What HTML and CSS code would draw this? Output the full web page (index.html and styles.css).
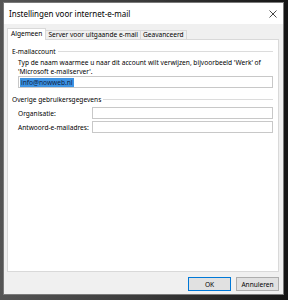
FILE: index.html
```html
<!DOCTYPE html>
<html lang="nl">
<head>
    <meta charset="UTF-8">
    <meta name="viewport" content="width=device-width, initial-scale=1.0">
    <title>Instellingen voor internet-e-mail</title>
    <link rel="stylesheet" href="styles.css">
</head>
<body>
    <div class="dialog">
        <div class="titlebar">
            <span class="title">Instellingen voor internet-e-mail</span>
            <svg class="close" width="8" height="8" viewBox="0 0 8 8">
                <path d="M0.5 0.5 L7.5 7.5 M7.5 0.5 L0.5 7.5" stroke="#333" stroke-width="0.9" fill="none"/>
            </svg>
        </div>

        <div class="dialog-body">
            <div class="tabs">
                <div class="tab active">Algemeen</div>
                <div class="tab">Server voor uitgaande e-mail</div>
                <div class="tab">Geavanceerd</div>
            </div>

            <div class="panel">
                <div class="group-title"><span>E-mailaccount</span></div>
                <div class="group">
                    <p class="hint">Typ de naam waarmee u naar dit account wilt verwijzen, bijvoorbeeld 'Werk' of 'Microsoft e-mailserver'.</p>
                    <div class="field wide"><span class="selected">info@nowweb.nl</span></div>
                </div>

                <div class="group-title"><span>Overige gebruikersgegevens</span></div>
                <div class="group form-rows">
                    <label>Organisatie:</label>
                    <div class="field"></div>
                    <label>Antwoord-e-mailadres:</label>
                    <div class="field"></div>
                </div>
            </div>

            <div class="buttons">
                <button class="default">OK</button>
                <button>Annuleren</button>
            </div>
        </div>
    </div>
</body>
</html>
```

FILE: styles.css
```css
* {
    margin: 0;
    padding: 0;
    box-sizing: border-box;
}

body {
    font-family: 'Noto Sans', sans-serif;
    font-size: 6.6px;
    color: #000;
    background: linear-gradient(to right, #555 0%, #3a3a3a 50%, #151515 100%);
    height: 300px;
    padding: 2px 4px 5px 3px;
}

.dialog {
    height: 293px;
    background: #f0f0f0;
    border: 1px solid #7a7a7a;
    display: flex;
    flex-direction: column;
}

.titlebar {
    height: 21px;
    background: #fff;
    display: flex;
    align-items: center;
    justify-content: space-between;
    padding: 0 6px 0 5px;
}

.title {
    font-size: 8px;
}

.close {
    display: block;
}

.dialog-body {
    flex: 1;
    display: flex;
    flex-direction: column;
    padding: 4px 4px 3px 3px;
}

.tabs {
    display: flex;
    align-items: flex-end;
    height: 11px;
    padding-left: 1px;
}

.tab {
    height: 9px;
    line-height: 8px;
    padding: 0 2px;
    border: 1px solid #d9d9d9;
    border-bottom: none;
    background: #f0f0f0;
    margin-left: -1px;
    white-space: nowrap;
}

.tab.active {
    height: 12px;
    line-height: 10px;
    background: #fff;
    position: relative;
    z-index: 1;
    margin-bottom: -1px;
    padding: 0 3px;
}

.panel {
    flex: 1;
    background: #fff;
    border: 1px solid #d9d9d9;
    padding: 6px 5px 0 4px;
}

.group-title {
    display: flex;
    align-items: center;
    gap: 2px;
    height: 10px;
}

.group-title::after {
    content: '';
    flex: 1;
    border-top: 1px solid #dcdcdc;
}

.group {
    padding: 2px 0 6px 6px;
}

.hint {
    line-height: 9px;
    color: #000;
}

.field {
    height: 12px;
    border: 1px solid #c8c8c8;
    background: #fff;
    display: flex;
    align-items: center;
    padding: 0 1px;
}

.field.wide {
    margin-top: 0;
}

.selected {
    background: #3d93e3;
    color: #0d2246;
    line-height: 9px;
    padding: 0 1px;
}

.form-rows {
    display: grid;
    grid-template-columns: 74px 1fr;
    row-gap: 2px;
    align-items: center;
    padding-top: 3px;
}

.form-rows label {
    white-space: nowrap;
}

.buttons {
    display: flex;
    justify-content: flex-end;
    gap: 5px;
    padding-top: 5px;
}

.buttons button {
    font-family: 'Noto Sans', sans-serif;
    font-size: 6.6px;
    width: 43px;
    height: 14px;
    background: #e1e1e1;
    border: 1px solid #adadad;
    color: #000;
}

.buttons button.default {
    border-color: #0078d7;
}
```
